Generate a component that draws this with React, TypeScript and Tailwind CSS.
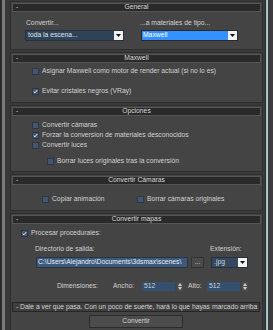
import React from "react";

const Header = ({ title }: { title: string }) => (
  <div className="h-[9px] mx-[1px] mt-[1px] bg-[#2a2a2a] border border-[#555555] grid grid-cols-[16px_1fr_16px] items-center shrink-0">
    <span className="pl-[3px] text-[#cfcfcf]">-</span>
    <span className="text-center text-[#d8d8d8]">{title}</span>
    <span />
  </div>
);

const Rollout = ({ title, h, children }: { title: string; h?: string; children: React.ReactNode }) => (
  <div className={`w-[253px] border border-[#2e2e2e] bg-[#444444] flex flex-col shrink-0 ${h ?? ""}`}>
    <Header title={title} />
    {children}
  </div>
);

const Check = ({ checked }: { checked?: boolean }) => (
  <div className="w-[7px] h-[7px] bg-[#44566b] border border-[#2b3646] shrink-0 flex items-center justify-center">
    {checked && (
      <svg width="7" height="7" viewBox="0 0 7 7">
        <path d="M1 3.5 L2.8 5.3 L6 1.5" stroke="#ffffff" strokeWidth="1.3" fill="none" />
      </svg>
    )}
  </div>
);

const Arrow = () => (
  <div className="w-[9px] h-[9px] bg-[#f2f2f2] flex items-center justify-center shrink-0">
    <svg width="5" height="4" viewBox="0 0 5 4">
      <path d="M0 0 H5 L2.5 3 Z" fill="#111111" />
    </svg>
  </div>
);

const Spinner = () => (
  <div className="w-[6px] h-[9px] bg-[#4d4d4d] flex flex-col items-center justify-center gap-[1px]">
    <svg width="4" height="3" viewBox="0 0 4 3">
      <path d="M0 3 H4 L2 0 Z" fill="#d0d0d0" />
    </svg>
    <svg width="4" height="3" viewBox="0 0 4 3">
      <path d="M0 0 H4 L2 3 Z" fill="#d0d0d0" />
    </svg>
  </div>
);

const CheckRow = ({ checked, label, className }: { checked?: boolean; label: string; className?: string }) => (
  <div className={`flex items-center gap-[3px] ${className ?? ""}`}>
    <Check checked={checked} />
    <span className="whitespace-nowrap">{label}</span>
  </div>
);

export default function App() {
  return (
    <div className="w-[273px] h-[330px] overflow-hidden flex bg-[#3a3a3a] font-['Liberation_Sans',Arial,sans-serif] text-[6.75px] leading-none text-[#d2d2d2]">
      <div className="w-[2px] bg-[#2a2a2a]" />
      <div className="w-[3px] bg-[#7a7a7a]" />
      <div className="w-[5px] bg-[#383838]" />
      <div className="w-[255px] flex flex-col gap-[2px] pt-[1px]">
        {/* General */}
        <Rollout title="General" h="h-[49px]">
          <div className="flex mt-[8px]">
            <div className="ml-[14px] w-[99px] flex flex-col">
              <span className="pl-[1px] h-[7px]">Convertir...</span>
              <div className="mt-[3px] h-[11px] bg-[#2f4358] border border-[#26313d] flex items-center justify-between">
                <span className="pl-[2px] text-[#dfe6ee]">toda la escena...</span>
                <Arrow />
              </div>
            </div>
            <div className="ml-[17px] w-[97px] flex flex-col">
              <span className="-ml-[1px] h-[7px]">...a materiales de tipo...</span>
              <div className="mt-[3px] h-[11px] bg-[#f4f4f4] border border-[#2a2a2a] flex items-center justify-between">
                <span className="h-full flex-1 bg-[#3392ff] text-white flex items-center pl-[1px]">Maxwell</span>
                <Arrow />
              </div>
            </div>
          </div>
        </Rollout>

        {/* Maxwell */}
        <Rollout title="Maxwell" h="h-[51px]">
          <CheckRow className="ml-[21px] mt-[5px]" label="Asignar Maxwell como motor de render actual (si no lo es)" />
          <CheckRow className="ml-[21px] mt-[13px]" checked label="Evitar cristales negros (VRay)" />
        </Rollout>

        {/* Opciones */}
        <Rollout title="Opciones" h="h-[67px]">
          <CheckRow className="ml-[21px] mt-[6px]" label="Convertir cámaras" />
          <CheckRow className="ml-[21px] mt-[3px]" checked label="Forzar la conversion de materiales desconocidos" />
          <CheckRow className="ml-[21px] mt-[3px]" label="Convertir luces" />
          <CheckRow className="ml-[36px] mt-[9px]" label="Borrar luces originales tras la conversión" />
        </Rollout>

        {/* Convertir Cámaras */}
        <Rollout title="Convertir Cámaras" h="h-[37px]">
          <div className="flex mt-[11px]">
            <CheckRow className="ml-[31px] w-[95px]" label="Copiar animación" />
            <CheckRow label="Borrar cámaras originales" />
          </div>
        </Rollout>

        {/* Convertir mapas */}
        <Rollout title="Convertir mapas" h="h-[130px]">
          <CheckRow className="ml-[10px] mt-[6px]" checked label="Procesar procedurales:" />
          <div className="flex mt-[9px] h-[7px]">
            <span className="ml-[24px] w-[175px]">Directorio de salida:</span>
            <span>Extensión:</span>
          </div>
          <div className="flex mt-[4px] h-[11px] items-center">
            <div className="ml-[25px] w-[152px] h-[11px] bg-[#3d5a7a] border border-[#263444] flex items-center overflow-hidden">
              <span className="pl-[1px] whitespace-nowrap text-[#e8eef5]">C:\Users\Alejandro\Documents\3dsmax\scenes\</span>
            </div>
            <div className="ml-[3px] w-[13px] h-[11px] bg-[#4a4a4a] border border-[#333333] flex items-center justify-center">
              <span>...</span>
            </div>
            <div className="ml-[7px] w-[37px] h-[11px] bg-[#34495f] border border-[#26313d] flex items-center justify-between">
              <span className="pl-[2px]">.jpg</span>
              <Arrow />
            </div>
          </div>
          <div className="flex mt-[14px] h-[9px] items-center">
            <span className="ml-[46px] w-[56px]">Dimensiones:</span>
            <span className="w-[29px]">Ancho:</span>
            <div className="w-[33px] h-[9px] bg-[#34506e] flex items-center pl-[2px]">512</div>
            <div className="ml-[2px]"><Spinner /></div>
            <span className="ml-[5px] w-[19px]">Alto:</span>
            <div className="w-[33px] h-[9px] bg-[#34506e] flex items-center pl-[2px]">512</div>
            <div className="ml-[2px]"><Spinner /></div>
          </div>
          <div className="ml-[1px] mt-[11px] w-[248px] h-[10px] border border-[#262626] bg-[#3e3e3e] flex items-center pl-[3px] whitespace-nowrap overflow-hidden">
            - Dale a ver que pasa. Con un poco de suerte, hará lo que hayas marcado arriba
          </div>
          <div className="ml-[78px] mt-[3px] w-[94px] h-[13px] bg-[#4c4c4c] border border-[#2c2c2c] flex items-center justify-center">
            Convertir
          </div>
        </Rollout>
      </div>
      <div className="w-[1px] bg-[#262626]" />
      <div className="w-[2px] bg-[#a9c6cc]" />
      <div className="flex-1 bg-[#3c3c3c]" />
    </div>
  );
}
